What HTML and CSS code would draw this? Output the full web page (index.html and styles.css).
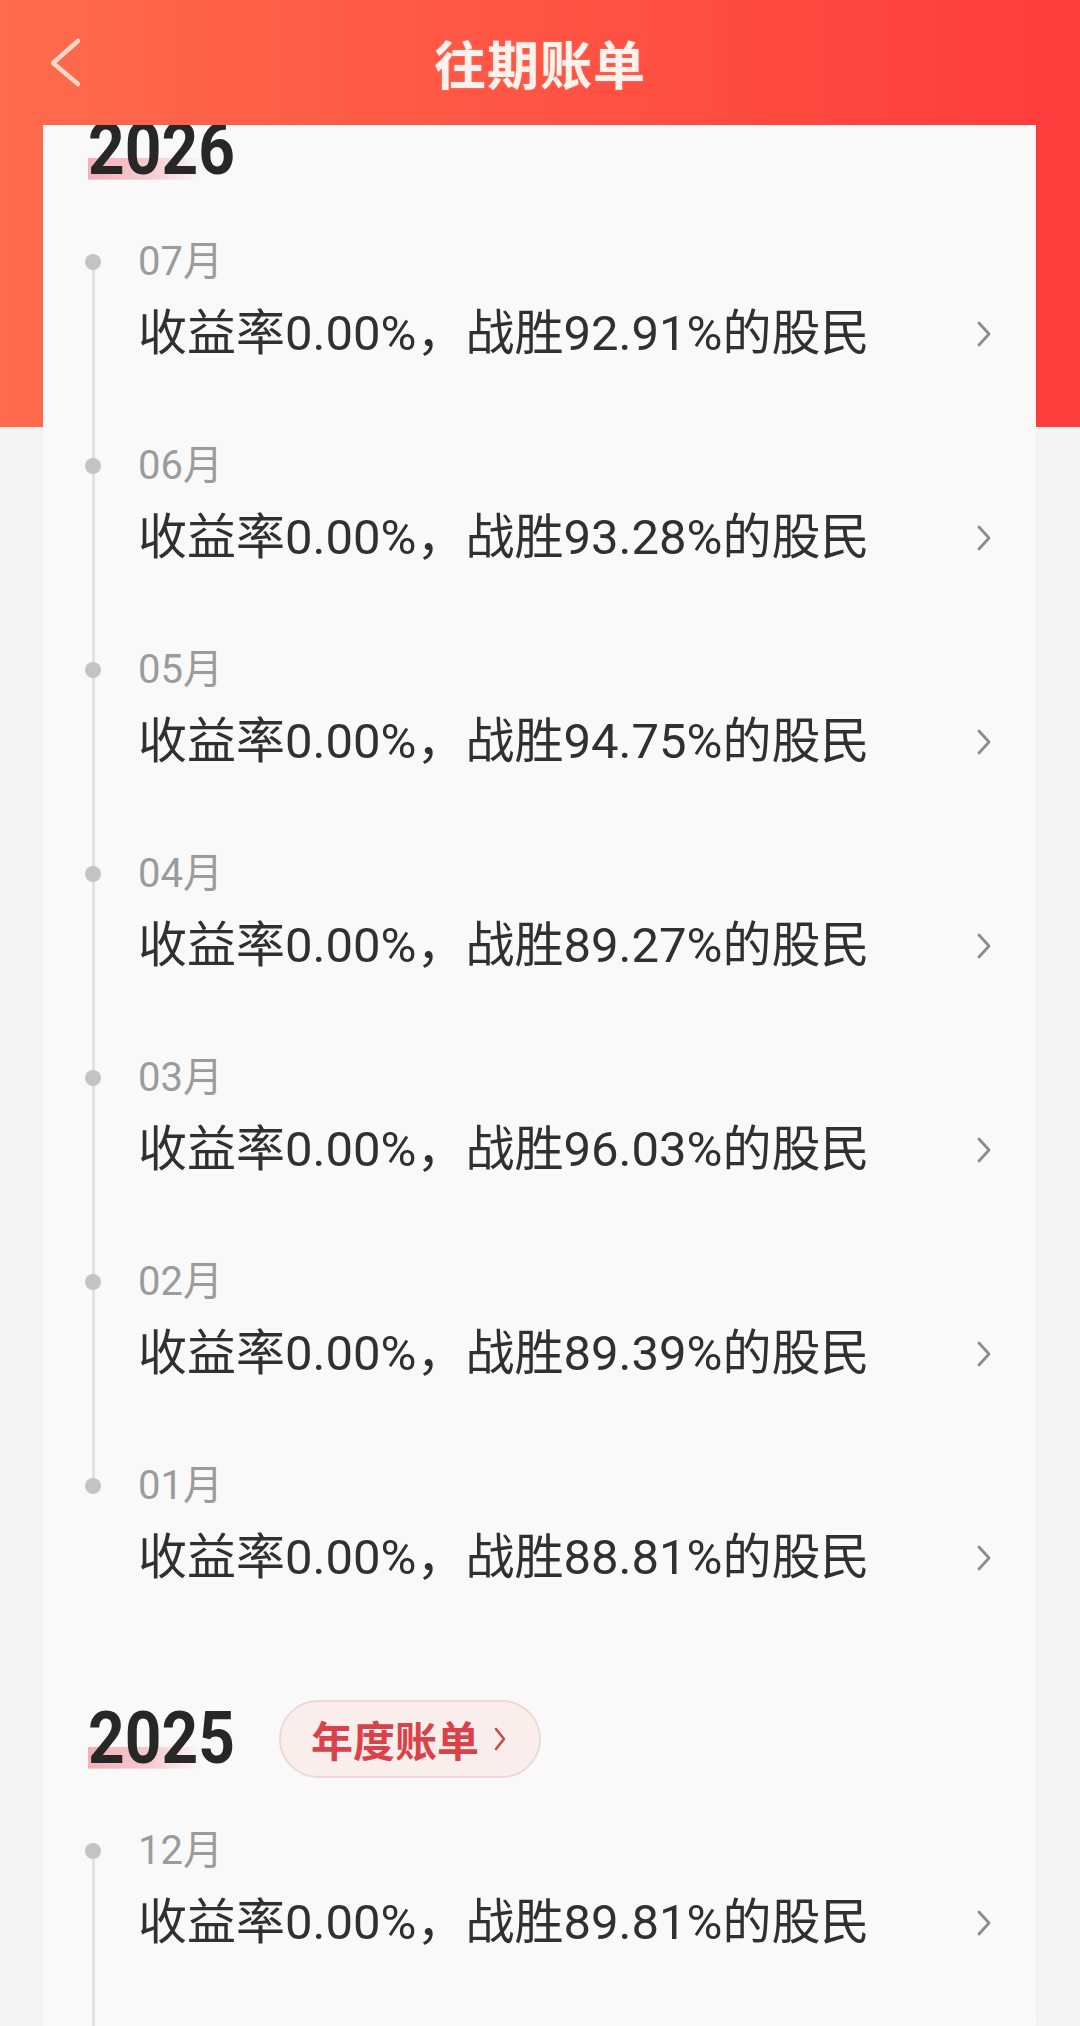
FILE: index.html
```html
<!DOCTYPE html>
<html lang="zh-CN">
<head>
<meta charset="utf-8">
<title>往期账单</title>
<link rel="stylesheet" href="styles.css">
</head>
<body>
<div class="page">
  <header class="topbar">
    <div class="back">
      <svg width="36" height="53" viewBox="0 0 36 53"><path d="M30 5 L5 27 L30 48" fill="none" stroke="#ffd9c9" stroke-width="4.5" stroke-linecap="round" stroke-linejoin="round"/></svg>
    </div>
    <h1 class="title">往期账单</h1>
    <div class="spacer"></div>
  </header>

  <main class="card">
    <div class="scroll">
      <section class="group">
        <div class="year-head"><span class="year">2026</span></div>
        <div class="item first">
          <div class="rail"><span class="seg top"></span><span class="dot"></span><span class="seg bottom"></span></div>
          <div class="content"><div class="month">07月</div><div class="line"><span class="desc">收益率0.00%，战胜92.91%的股民</span><svg class="chev" width="16" height="28" viewBox="0 0 16 28"><path d="M3 3 L13 14 L3 25" fill="none" stroke="#8c8c8c" stroke-width="2.8" stroke-linecap="round" stroke-linejoin="round"/></svg></div></div>
        </div>
        <div class="item">
          <div class="rail"><span class="seg top"></span><span class="dot"></span><span class="seg bottom"></span></div>
          <div class="content"><div class="month">06月</div><div class="line"><span class="desc">收益率0.00%，战胜93.28%的股民</span><svg class="chev" width="16" height="28" viewBox="0 0 16 28"><path d="M3 3 L13 14 L3 25" fill="none" stroke="#8c8c8c" stroke-width="2.8" stroke-linecap="round" stroke-linejoin="round"/></svg></div></div>
        </div>
        <div class="item">
          <div class="rail"><span class="seg top"></span><span class="dot"></span><span class="seg bottom"></span></div>
          <div class="content"><div class="month">05月</div><div class="line"><span class="desc">收益率0.00%，战胜94.75%的股民</span><svg class="chev" width="16" height="28" viewBox="0 0 16 28"><path d="M3 3 L13 14 L3 25" fill="none" stroke="#8c8c8c" stroke-width="2.8" stroke-linecap="round" stroke-linejoin="round"/></svg></div></div>
        </div>
        <div class="item">
          <div class="rail"><span class="seg top"></span><span class="dot"></span><span class="seg bottom"></span></div>
          <div class="content"><div class="month">04月</div><div class="line"><span class="desc">收益率0.00%，战胜89.27%的股民</span><svg class="chev" width="16" height="28" viewBox="0 0 16 28"><path d="M3 3 L13 14 L3 25" fill="none" stroke="#8c8c8c" stroke-width="2.8" stroke-linecap="round" stroke-linejoin="round"/></svg></div></div>
        </div>
        <div class="item">
          <div class="rail"><span class="seg top"></span><span class="dot"></span><span class="seg bottom"></span></div>
          <div class="content"><div class="month">03月</div><div class="line"><span class="desc">收益率0.00%，战胜96.03%的股民</span><svg class="chev" width="16" height="28" viewBox="0 0 16 28"><path d="M3 3 L13 14 L3 25" fill="none" stroke="#8c8c8c" stroke-width="2.8" stroke-linecap="round" stroke-linejoin="round"/></svg></div></div>
        </div>
        <div class="item">
          <div class="rail"><span class="seg top"></span><span class="dot"></span><span class="seg bottom"></span></div>
          <div class="content"><div class="month">02月</div><div class="line"><span class="desc">收益率0.00%，战胜89.39%的股民</span><svg class="chev" width="16" height="28" viewBox="0 0 16 28"><path d="M3 3 L13 14 L3 25" fill="none" stroke="#8c8c8c" stroke-width="2.8" stroke-linecap="round" stroke-linejoin="round"/></svg></div></div>
        </div>
        <div class="item last">
          <div class="rail"><span class="seg top"></span><span class="dot"></span><span class="seg bottom"></span></div>
          <div class="content"><div class="month">01月</div><div class="line"><span class="desc">收益率0.00%，战胜88.81%的股民</span><svg class="chev" width="16" height="28" viewBox="0 0 16 28"><path d="M3 3 L13 14 L3 25" fill="none" stroke="#8c8c8c" stroke-width="2.8" stroke-linecap="round" stroke-linejoin="round"/></svg></div></div>
        </div>
      </section>

      <section class="group">
        <div class="year-head">
          <span class="year">2025</span>
          <span class="pill"><span class="pill-text">年度账单</span><svg width="14" height="26" viewBox="0 0 14 26"><path d="M3 3 L11 13 L3 23" fill="none" stroke="#c44c4f" stroke-width="2.6" stroke-linecap="round" stroke-linejoin="round"/></svg></span>
        </div>
        <div class="item first">
          <div class="rail"><span class="seg top"></span><span class="dot"></span><span class="seg bottom"></span></div>
          <div class="content"><div class="month">12月</div><div class="line"><span class="desc">收益率0.00%，战胜89.81%的股民</span><svg class="chev" width="16" height="28" viewBox="0 0 16 28"><path d="M3 3 L13 14 L3 25" fill="none" stroke="#8c8c8c" stroke-width="2.8" stroke-linecap="round" stroke-linejoin="round"/></svg></div></div>
        </div>
      </section>
    </div>
  </main>
</div>
</body>
</html>
```

FILE: styles.css
```css
html, body {
  margin: 0;
  padding: 0;
}
body {
  width: 1080px;
  height: 2026px;
  overflow: hidden;
  background: #f4f4f4;
  font-family: Roboto, "Noto Sans CJK SC", sans-serif;
}
.page {
  height: 2026px;
  background: linear-gradient(to right, #ff6b4c 0%, #fe5444 50%, #fd3c3c 100%) top left / 100% 427px no-repeat, #f4f4f4;
}
.topbar {
  height: 125px;
  display: grid;
  grid-template-columns: 1fr auto 1fr;
  align-items: center;
}
.back {
  padding-left: 48px;
  display: flex;
  align-items: center;
}
.back svg { display: block; }
.title {
  margin: 0;
  font-family: "Noto Sans CJK SC", sans-serif;
  font-weight: 700;
  font-size: 52px;
  line-height: 60px;
  color: #fff2ec;
  letter-spacing: 1px;
  text-shadow: 0 0 2px rgba(255, 200, 180, 0.5);
}
.card {
  display: block;
  margin: 0 44px 0 43px;
  height: 1901px;
  overflow: hidden;
  background: #f9f9f9;
  box-shadow: 0 0 3px rgba(0, 0, 0, 0.03);
}
.scroll {
  margin-top: -50px;
}
.year-head {
  height: 78px;
  padding: 36px 0 49px 45px;
  display: flex;
  align-items: center;
  gap: 44px;
}
.group + .group .year-head {
  margin-top: -2px;
}
.year {
  display: inline-block;
  font-family: Roboto, sans-serif;
  font-weight: 700;
  font-size: 64px;
  line-height: 64px;
  height: 64px;
  color: #272727;
  transform: scaleY(1.14);
  transform-origin: 50% 50%;
  background: linear-gradient(to right, rgba(236, 72, 92, 0.42), rgba(236, 72, 92, 0.26) 55%, rgba(236, 72, 92, 0)) no-repeat;
  background-size: 116px 19px;
  background-position: -1px 39px;
}
.pill {
  box-sizing: border-box;
  height: 78px;
  width: 262px;
  border-radius: 39px;
  border: 2px solid #ecd9d7;
  background: #faeeec;
  display: flex;
  align-items: center;
  padding: 0 30px 0 30px;
  gap: 14px;
}
.pill svg { display: block; }
.pill-text {
  font-family: "Noto Sans CJK SC", sans-serif;
  font-weight: 700;
  font-size: 42px;
  line-height: 50px;
  color: #d9424b;
}
.item {
  display: flex;
  height: 204px;
}
.rail {
  width: 16px;
  margin-left: 42px;
  margin-right: 37px;
  display: flex;
  flex-direction: column;
  align-items: center;
}
.seg {
  width: 3px;
  background: #e2e2e2;
}
.seg.top { height: 16px; }
.seg.bottom { flex: 1; }
.item.first .seg.top { visibility: hidden; }
.item.last .seg.bottom { visibility: hidden; }
.dot {
  width: 16px;
  height: 16px;
  border-radius: 50%;
  background: #c3c3c3;
  flex: none;
}
.content {
  flex: 1;
  padding-right: 44px;
}
.month {
  font-size: 40px;
  line-height: 48px;
  color: #9b9b9b;
}
.line {
  margin-top: 18px;
  height: 60px;
  display: flex;
  align-items: center;
  justify-content: space-between;
}
.desc {
  font-size: 49px;
  line-height: 60px;
  color: #303030;
}
.chev { display: block; }
```
